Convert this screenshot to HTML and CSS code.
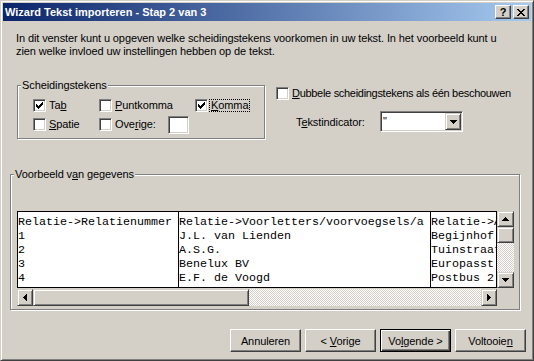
FILE: index.html
```html
<!DOCTYPE html>
<html lang="nl">
<head>
    <meta charset="UTF-8">
    <title>Wizard Tekst importeren - Stap 2 van 3</title>
    <link rel="stylesheet" href="styles.css">
</head>
<body>
    <div class="dialog">
        <div class="titlebar">
            <span class="title-text">Wizard Tekst importeren - Stap 2 van 3</span>
            <div class="title-buttons">
                <button class="title-btn">?</button>
                <button class="title-btn">
                    <svg width="8" height="7" viewBox="0 0 8 7" shape-rendering="crispEdges"><path d="M0 0h2v1H0zM6 0h2v1H6zM1 1h2v1H1zM5 1h2v1H5zM2 2h4v1H2zM3 3h2v1H3zM2 4h4v1H2zM1 5h2v1H1zM5 5h2v1H5zM0 6h2v1H0zM6 6h2v1H6z"/></svg>
                </button>
            </div>
        </div>

        <div class="dialog-body">
            <p class="intro">In dit venster kunt u opgeven welke scheidingstekens voorkomen in uw tekst. In het voorbeeld kunt u<br>zien welke invloed uw instellingen hebben op de tekst.</p>

            <div class="options-row">
                <div class="group delimiters">
                    <div class="group-label">Scheidingstekens</div>
                    <div class="delimiter-grid">
                        <div class="check-item">
                            <span class="checkbox"><svg width="7" height="7" viewBox="0 0 7 7" shape-rendering="crispEdges"><path d="M0 2h1v3H0zM1 3h1v3H1zM2 4h1v3H2zM3 3h1v3H3zM4 2h1v3H4zM5 1h1v3H5zM6 0h1v3H6z"/></svg></span>
                            <span class="check-label">Ta<u>b</u></span>
                        </div>
                        <div class="check-item">
                            <span class="checkbox"></span>
                            <span class="check-label"><u>P</u>untkomma</span>
                        </div>
                        <div class="check-item">
                            <span class="checkbox"><svg width="7" height="7" viewBox="0 0 7 7" shape-rendering="crispEdges"><path d="M0 2h1v3H0zM1 3h1v3H1zM2 4h1v3H2zM3 3h1v3H3zM4 2h1v3H4zM5 1h1v3H5zM6 0h1v3H6z"/></svg></span>
                            <span class="check-label focused"><u>K</u>omma</span>
                        </div>
                        <div class="check-item">
                            <span class="checkbox"></span>
                            <span class="check-label"><u>S</u>patie</span>
                        </div>
                        <div class="check-item">
                            <span class="checkbox"></span>
                            <span class="check-label">Ove<u>r</u>ige:</span>
                            <span class="text-field"></span>
                        </div>
                    </div>
                </div>

                <div class="extra-options">
                    <div class="check-item">
                        <span class="checkbox"></span>
                        <span class="check-label tight"><u>D</u>ubbele scheidingstekens als één beschouwen</span>
                    </div>
                    <div class="indicator-row">
                        <span class="indicator-label">T<u>e</u>kstindicator:</span>
                        <div class="combo">
                            <span class="combo-value">"</span>
                            <span class="raised combo-btn">
                                <svg width="7" height="4" viewBox="0 0 7 4" shape-rendering="crispEdges"><path d="M0 0h7v1H0zM1 1h5v1H1zM2 2h3v1H2zM3 3h1v1H3z"/></svg>
                            </span>
                        </div>
                    </div>
                </div>
            </div>

            <div class="group preview-group">
                <div class="group-label">Voorbeeld v<u>a</u>n gegevens</div>
                <div class="preview-grid">
                    <div class="preview-table">
                        <div class="preview-col col-1">Relatie-&gt;Relatienummer
1
2
3
4</div>
                        <div class="preview-col col-2">Relatie-&gt;Voorletters/voorvoegsels/a
J.L. van Lienden
A.S.G.
Benelux BV
E.F. de Voogd</div>
                        <div class="preview-col col-3">Relatie-&gt;A
Begijnhof
Tuinstraat
Europasst
Postbus 2</div>
                    </div>
                    <div class="vscroll">
                        <span class="raised scroll-btn">
                            <svg width="7" height="4" viewBox="0 0 7 4" shape-rendering="crispEdges"><path d="M3 0h1v1H3zM2 1h3v1H2zM1 2h5v1H1zM0 3h7v1H0z"/></svg>
                        </span>
                        <span class="raised scroll-thumb"></span>
                        <span class="scroll-track"></span>
                        <span class="raised scroll-btn">
                            <svg width="7" height="4" viewBox="0 0 7 4" shape-rendering="crispEdges"><path d="M0 0h7v1H0zM1 1h5v1H1zM2 2h3v1H2zM3 3h1v1H3z"/></svg>
                        </span>
                    </div>
                    <div class="hscroll">
                        <span class="raised scroll-btn">
                            <svg width="4" height="7" viewBox="0 0 4 7" shape-rendering="crispEdges"><path d="M0 3h1v1H0zM1 2h1v3H1zM2 1h1v5H2zM3 0h1v7H3z"/></svg>
                        </span>
                        <span class="raised scroll-thumb"></span>
                        <span class="scroll-track"></span>
                        <span class="raised scroll-btn">
                            <svg width="4" height="7" viewBox="0 0 4 7" shape-rendering="crispEdges"><path d="M0 0h1v7H0zM1 1h1v5H1zM2 2h1v3H2zM3 3h1v1H3z"/></svg>
                        </span>
                    </div>
                </div>
            </div>

            <div class="button-row">
                <button class="btn">Annuleren</button>
                <button class="btn">&lt; <u>V</u>orige</button>
                <button class="btn btn-default">Vo<u>l</u>gende &gt;</button>
                <button class="btn">Voltooie<u>n</u></button>
            </div>
        </div>
    </div>
</body>
</html>
```

FILE: styles.css
```css
body {
    margin: 0;
    font-family: "Liberation Sans", Arial, sans-serif;
    font-size: 11px;
    letter-spacing: -0.1px;
    color: #000;
    background-color: #d4d0c8;
}

.dialog {
    width: 534px;
    height: 361px;
    box-sizing: border-box;
    padding: 2px;
    border: 1px solid;
    border-color: #d4d0c8 #404040 #404040 #d4d0c8;
    box-shadow: inset 1px 1px #fff, inset -1px -1px #808080;
    background-color: #d4d0c8;
    display: flex;
    flex-direction: column;
}

/* title bar */

.titlebar {
    height: 18px;
    display: flex;
    align-items: center;
    padding-left: 2px;
    background: linear-gradient(to right, #0a246a, #a6caf0);
    color: white;
}

.title-text {
    flex: 1;
    font-weight: bold;
    letter-spacing: 0;
}

.title-buttons {
    display: flex;
    gap: 2px;
    margin-right: 2px;
}

.title-btn {
    width: 16px;
    height: 14px;
    padding: 0;
    box-sizing: border-box;
    background-color: #d4d0c8;
    border: 1px solid;
    border-color: #fff #404040 #404040 #fff;
    box-shadow: inset -1px -1px #808080;
    display: flex;
    align-items: center;
    justify-content: center;
    font-family: "Liberation Sans", Arial, sans-serif;
    font-size: 11px;
    font-weight: bold;
    color: #000;
}

/* shared 3d bits */

.raised {
    box-sizing: border-box;
    background-color: #d4d0c8;
    border: 1px solid;
    border-color: #d4d0c8 #404040 #404040 #d4d0c8;
    box-shadow: inset 1px 1px #fff, inset -1px -1px #808080;
    display: flex;
    align-items: center;
    justify-content: center;
}

.group {
    box-sizing: border-box;
    border: 1px solid #808080;
    box-shadow: 1px 1px 0 #fff, inset 1px 1px 0 #fff;
}

.group-label {
    width: fit-content;
    margin: -7px 0 0 3px;
    padding: 0 1px;
    line-height: 13px;
    background-color: #d4d0c8;
}

/* body */

.dialog-body {
    flex: 1;
    display: flex;
    flex-direction: column;
}

.intro {
    margin: 11px 0 0 13px;
    line-height: 13px;
}

.options-row {
    display: flex;
    align-items: flex-start;
    margin: 27px 0 0 14px;
}

.delimiters {
    width: 248px;
    height: 54px;
}

.delimiter-grid {
    display: grid;
    grid-template-columns: 66px 96px auto;
    grid-template-rows: 13px 13px;
    row-gap: 6px;
    margin: 7px 0 0 15px;
}

.check-item {
    display: flex;
    align-items: center;
    height: 13px;
}

.checkbox {
    width: 13px;
    height: 13px;
    flex-shrink: 0;
    box-sizing: border-box;
    background-color: white;
    border: 1px solid;
    border-color: #808080 #fff #fff #808080;
    box-shadow: inset 1px 1px #404040, inset -1px -1px #d4d0c8;
    display: flex;
    align-items: center;
    justify-content: center;
}

.check-label {
    margin-left: 1px;
    padding: 0 1px;
    border: 1px solid transparent;
    line-height: 11px;
    white-space: nowrap;
}

.check-label.focused {
    border: 1px dotted #000;
}

.check-label.tight {
    letter-spacing: -0.3px;
}

.text-field {
    width: 21px;
    height: 18px;
    flex-shrink: 0;
    margin-left: auto;
    margin-right: 6px;
    box-sizing: border-box;
    background-color: white;
    border: 1px solid;
    border-color: #808080 #fff #fff #808080;
    box-shadow: inset 1px 1px #404040, inset -1px -1px #d4d0c8;
}

.extra-options {
    margin: 2px 0 0 11px;
}

.indicator-row {
    display: flex;
    align-items: center;
    margin: 11px 0 0 20px;
}

.indicator-label {
    width: 84px;
}

.combo {
    width: 83px;
    height: 21px;
    box-sizing: border-box;
    padding: 1px;
    display: flex;
    background-color: white;
    border: 1px solid;
    border-color: #808080 #fff #fff #808080;
    box-shadow: inset 1px 1px #404040, inset -1px -1px #d4d0c8;
}

.combo-value {
    flex: 1;
    padding-left: 1px;
    line-height: 17px;
}

.combo-btn {
    width: 16px;
    height: 17px;
}

/* preview */

.preview-group {
    width: 510px;
    height: 136px;
    margin: 35px 0 0 7px;
}

.preview-grid {
    display: grid;
    grid-template-columns: 480px 17px;
    grid-template-rows: 77px 17px;
    row-gap: 1px;
    margin: 30px 0 0 6px;
}

.preview-table {
    display: flex;
    overflow: hidden;
    border: 1px solid #000;
    background-color: white;
    font-family: "Liberation Mono", "Courier New", monospace;
    font-size: 11.67px;
    letter-spacing: 0;
    line-height: 14px;
}

.preview-col {
    flex-shrink: 0;
    padding-top: 3px;
    overflow: hidden;
    white-space: pre;
    border-right: 1px solid #000;
}

.col-1 { width: 160px; }
.col-2 { width: 251px; }
.col-3 { width: 65px; border-right: none; }

.vscroll {
    display: flex;
    flex-direction: column;
}

.vscroll .scroll-btn,
.vscroll .scroll-thumb {
    height: 16px;
}

.hscroll {
    display: flex;
}

.hscroll .scroll-btn {
    width: 16px;
}

.hscroll .scroll-thumb {
    width: 216px;
}

.scroll-track {
    flex: 1;
    background: repeating-conic-gradient(#fff 0 25%, #d4d0c8 0 50%) 0 0 / 2px 2px;
}

/* buttons */

.button-row {
    display: flex;
    justify-content: flex-end;
    gap: 4px;
    margin: 19px 5px 0 0;
}

.btn {
    width: 71px;
    height: 23px;
    padding: 0;
    box-sizing: border-box;
    background-color: #d4d0c8;
    border: 1px solid;
    border-color: #fff #404040 #404040 #fff;
    box-shadow: inset -1px -1px #808080;
    font-family: "Liberation Sans", Arial, sans-serif;
    font-size: 11px;
    letter-spacing: -0.1px;
    color: #000;
}

.btn-default {
    border-color: #000;
    box-shadow: inset 1px 1px #fff, inset -1px -1px #404040, inset -2px -2px #808080;
}
```
